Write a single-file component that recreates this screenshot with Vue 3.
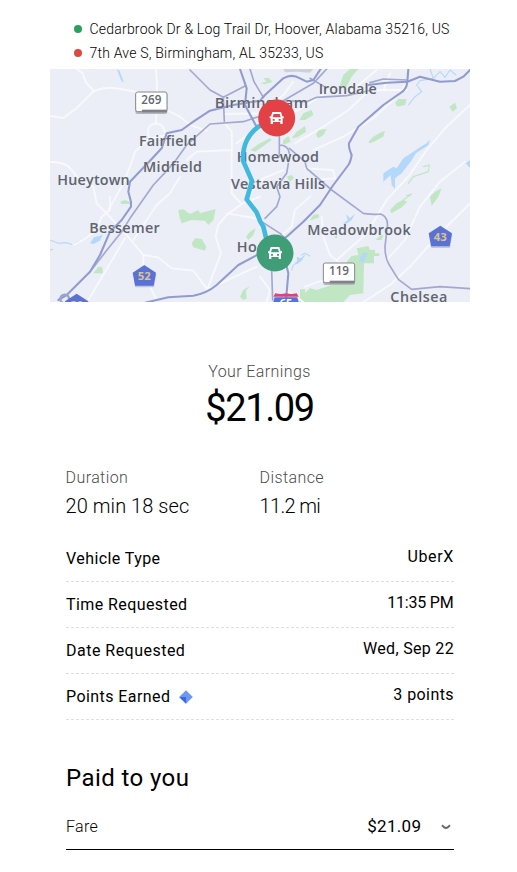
<script setup>
const stops = [
  { kind: 'start', text: 'Cedarbrook Dr & Log Trail Dr, Hoover, Alabama 35216, US' },
  { kind: 'end', text: '7th Ave S, Birmingham, AL 35233, US' },
]

const whiteRoads = [
  'M80 177L98 190L108 218L132 243L80 294L40 324L0 318',
  'M132 243Q170 228 205 236L330 258L350 300L390 320L420 345L470 362',
  'M318 177L322 246L318 340Q285 345 298 385L350 375L335 345L318 340',
  'M298 385L255 425L240 470L220 520L170 610',
  'M0 456Q50 455 65 480L80 500L130 530L140 580L165 605L230 675L280 735L325 742L365 775L430 782L472 838L620 770',
  'M180 560L180 600L155 620L140 660L100 690L70 705',
  'M390 500L360 550L320 585L250 690M225 685L115 870',
  'M280 735L280 780M300 830L318 866',
  'M630 560L575 582L530 615L505 645L497 680L513 730L472 838',
  'M530 610L620 625M545 420L545 550L575 582M520 335L545 365L546 420L440 425L410 450',
  'M525 312L640 310',
  'M735 400L820 350L895 300L960 240M790 420L880 380L970 325L1045 255L1070 220',
  'M640 345L745 300L850 235M895 250L960 240L1070 240',
  'M895 250L980 180M1000 240L1020 190',
  'M1260 285L1190 350L1130 420L1075 500L1010 570L950 670L860 750',
  'M1245 455L1170 515L1110 590L1065 690L1010 750',
  'M1260 580L1160 680L1080 770L1020 825L940 876',
  'M765 475L850 480L855 505L765 510M780 560L735 600L725 650L690 680',
  'M815 620L820 680L840 735L870 760',
  'M630 800L660 840L650 876M765 830L820 810M710 840L760 876',
  'M590 560L640 505L700 480M560 400L600 370M640 300L700 255L730 215',
]
const blueRoads = [
  'M420 180L480 240L520 262L585 228M520 262L523 335',
  'M120 785L175 715L215 665L240 625L310 525L345 488L378 450L410 405L480 342L580 335L625 320',
  'M600 177L612 215L640 262M700 272L770 275L800 262L890 257L965 240',
  'M688 378V440M688 405Q715 405 718 430M715 460L710 490L680 530L690 560L680 590L645 625',
  'M718 415L765 455L770 475L845 540L940 610Q980 615 992 612Q1015 620 1012 650L1005 710Q1005 745 1018 765L1045 808L1085 838L1170 830L1260 836',
  'M665 780L668 870M635 635L690 670L710 690M960 218L1000 207L1070 210',
  'M700 272L790 220L830 177M780 205L820 228',
]
const freeways = [
  'M25 870L50 855L120 785L150 735L180 665L215 630L243 590L243 575L235 545L240 515L300 452L335 415L350 370L395 360L430 335L480 302L550 285L630 272L645 255L700 205Q725 190 750 205L770 215L790 210L812 177',
  'M570 177L590 235L585 285L622 355',
  'M1075 177L1072 215Q1070 240 1050 250L1000 285L925 350L897 400Q895 412 905 435Q902 455 895 465L850 525L810 585L760 635L710 680L640 725L565 765L500 825Q470 850 430 857L355 862L285 878',
  'M955 225L1010 218L1072 215L1110 200L1170 215L1215 213L1240 200L1262 178',
  'M705 750L715 790L708 870',
]
const parks = [
  'M630 220L650 215L640 205L655 203L668 216L645 222Z',
  'M868 230L880 195L900 177H925L905 200L890 230Z',
  'M1035 280L1045 267L1070 268L1065 285L1042 290Z',
  'M1198 290L1215 278L1221 295L1208 305Z',
  'M955 395L970 380L990 368L1005 362L1000 380L970 396L960 400Z',
  'M725 385L740 365L765 348L768 365L742 382Z',
  'M798 375L805 360L830 357L820 375L805 385Z',
  'M748 330L760 310L785 300L790 315L765 330Z',
  'M698 402L700 390L715 378L722 395L705 403Z',
  'M600 420L630 400L660 385L665 390L635 412L615 425Z',
  'M385 600L400 598L420 612L445 600L450 610L497 597L490 630L475 645L465 632L425 630L395 640L388 620Z',
  'M425 700L435 685L455 687L469 710L465 722L430 712Z',
  'M210 575L225 570L240 576L240 582H215Z',
  'M130 790L145 770L157 772L158 790Z',
  'M750 876V838H765V848L780 835L800 840L860 820L900 800L895 765L890 755L905 738L925 735L920 715L945 710L955 708L960 720H975V730H988V738H972V760H942L940 850L900 855L880 876Z',
  'M780 630L790 615L805 612L808 622L785 630Z',
  'M1020 600L1040 580L1060 570L1072 575L1055 592L1025 610Z',
  'M1140 560L1155 545L1175 535L1165 560L1145 588Z',
  'M570 860L580 840L600 828L588 842L590 866L580 870Z',
  'M588 680L600 665L617 655L610 675L595 690Z',
  'M710 500L725 495L732 503L720 515Z',
  'M977 690L990 677L1000 675L995 690Z',
  'M852 683L860 676L862 684Z',
]
const lakes = [
  'M200 177L209 183L222 218L214 212Z',
  'M1000 515L1000 490L1030 470L1040 475L1060 445L1080 432L1105 415L1130 400L1140 388L1135 405L1098 430L1082 455L1055 490L1035 505L1035 537L1025 525L1022 495Z',
  'M120 700L132 682L158 675L150 692L130 702Z',
  'M880 640L893 630L888 613L900 624L915 612L905 630L885 644Z',
  'M730 765L742 752L740 740L752 745L767 732L755 752L742 762Z',
  'M928 757L930 742L940 728L955 730L940 757Z',
  'M1247 460L1260 450V474Z',
]
const streams = [
  'M1140 177L1150 205L1170 185L1185 202L1200 180L1218 195M1075 285L1095 260L1115 245L1100 225L1110 212L1150 205',
  'M0 690L25 700L50 698L70 705L85 695M0 720L8 718',
  'M730 765L725 780M755 735L765 730L780 738',
]
const places = [
  ['Birmingham', 494, 294, 280, 45], ['Irondale', 806, 251, 174, 43],
  ['Fairfield', 267, 409, 173, 43], ['Midfield', 279, 487, 177, 43],
  ['Homewood', 560, 457, 247, 43], ['Hueytown', 22, 525, 217, 43],
  ['Vestavia Hills', 543, 537, 282, 43], ['Bessemer', 118, 669, 211, 43],
  ['Meadowbrook', 772, 676, 310, 43], ['Hoover', 560, 725, 158, 43],
  ['Chelsea', 1021, 875, 171, 43],
]
const pentagons = [['52', 283, 798], ['43', 1171, 680], ['20', 80, 884]]
const plates = [['269', 304, 276], ['119', 867, 789]]
const pins = [
  { id: 'dropoff', x: 680, y: 324, fill: '#e24145' },
  { id: 'pickup', x: 675, y: 729, fill: '#3f9d78' },
]

const details = [
  { label: 'Vehicle Type', value: 'UberX', a: 'vehicle' },
  { label: 'Time Requested', value: '11:35 PM', a: 'time' },
  { label: 'Date Requested', value: 'Wed, Sep 22', a: 'date' },
  { label: 'Points Earned', value: '3 points', a: 'points' },
]
</script>

<template>
  <main class="trip">
    <ul class="stops">
      <li v-for="s in stops" :key="s.kind" :class="s.kind"><i class="dot"></i><span>{{ s.text }}</span></li>
    </ul>

    <svg class="map" viewBox="0 177 1260 699" preserveAspectRatio="none">
      <rect y="177" width="1260" height="699" fill="#ebeef6" />
      <path d="M700 177H790L780 188L740 185L705 187Z" fill="#cdd1de" />
      <path v-for="d in parks" :key="d" :d="d" fill="#c0e6c4" />
      <path v-for="d in lakes" :key="d" :d="d" fill="#b4d8fa" />
      <g fill="none" stroke-linejoin="round" stroke-linecap="round">
        <path v-for="d in streams" :key="d" :d="d" stroke="#b9d9f6" stroke-width="3.5" />
        <path d="M1075 520L1090 500L1135 485L1138 465L1120 470M1025 600L1060 570L1085 552L1070 557" stroke="#c0e6c4" stroke-width="3.5" />
        <path v-for="d in whiteRoads" :key="d" :d="d" stroke="#f8f9fc" stroke-width="5.5" />
        <path v-for="d in blueRoads" :key="d" :d="d" stroke="#a3a8d0" stroke-width="5" />
        <path v-for="d in freeways" :key="d" :d="d" stroke="#929bce" stroke-width="6.2" />
      </g>
      <circle cx="44" cy="867" r="13" fill="none" stroke="#9aa2ce" stroke-width="7" />

      <g class="place">
        <text v-for="p in places" :key="p[0]" :x="p[1]" :y="p[2]" :textLength="p[3]" :font-size="p[4]">{{ p[0] }}</text>
      </g>

      <g v-for="p in plates" :key="p[0]" :transform="`translate(${p[1]} ${p[2]})`">
        <rect x="-48" y="-27" width="96" height="63" rx="7" fill="#b4b6ba" />
        <rect x="-47" y="-30" width="94" height="59" rx="6" fill="#fff" stroke="#85888e" stroke-width="3" />
        <path d="M-28 23H47V31H-28Z" fill="#7f8288" />
        <text class="plate" text-anchor="middle" y="7">{{ p[0] }}</text>
      </g>
      <g v-for="p in pentagons" :key="p[0]" :transform="`translate(${p[1]} ${p[2]})`">
        <path d="M-31 -4L0 -29L36 -4L29 34H-27Z" fill="#c3c8d4" />
        <path d="M0 -33L35 -10L28 29H-28L-35 -10Z" fill="#5a72d5" />
        <text class="county" text-anchor="middle" y="12">{{ p[0] }}</text>
      </g>
      <g>
        <path d="M674 862H742L746 876H670Z" fill="#5a72d5" />
        <path d="M676 850Q692 854 708 850Q724 854 740 850L746 860H670Z" fill="#e63f76" />
        <text class="interstate" x="708" y="891" text-anchor="middle">65</text>
      </g>

      <path d="M665 335L625 350Q600 370 591 390Q578 415 579 452L606 513L590 568L620 607L631 635L640 650L652 700" fill="none" stroke="#41b9dc" stroke-width="14" stroke-linejoin="round" />
      <g v-for="p in pins" :key="p.id" :transform="`translate(${p.x} ${p.y})`">
        <circle r="55.5" :fill="p.fill" />
        <path fill="#fff" fill-rule="evenodd" d="M-13 -18H13L17 -5H21V1H18V18H11V12H-11V18H-18V1H-21V-5H-17ZM-9 -12L-12 -2H12L9 -12ZM-12 3V8H-6V3ZM6 3V8H12V3Z" />
      </g>
    </svg>

    <section class="earnings">
      <p class="caption">Your Earnings</p>
      <p class="total">$21.09</p>
    </section>

    <section class="stats">
      <div><p class="caption">Duration</p><p class="figure">20 min 18 sec</p></div>
      <div><p class="caption">Distance</p><p class="figure distance">11.2 mi</p></div>
    </section>

    <dl class="details">
      <div v-for="d in details" :key="d.a" class="row" :class="d.a">
        <dt>{{ d.label }}
          <svg v-if="d.a === 'points'" class="gem" viewBox="0 0 14 14">
            <path d="M7 0.3L13.8 7L7 13.7L0.2 7Z" fill="#6d98f2" />
            <path d="M0.2 7H7V13.7Z" fill="#376bdd" />
          </svg>
        </dt>
        <dd>{{ d.value }}</dd>
      </div>
    </dl>

    <h2>Paid to you</h2>
    <div class="fare">
      <span class="fare-label">Fare</span>
      <span class="fare-value">$21.09</span>
      <svg class="chevron" viewBox="0 0 10 6"><path d="M1 1.2L3.4 3.4Q5 4.5 6.6 3.4L9 1.2" fill="none" stroke="#686868" stroke-width="1.9" /></svg>
    </div>
  </main>
</template>

<style>
body { margin: 0; background: #fff; }
</style>

<style scoped>
.trip {
  box-sizing: border-box;
  width: 517px;
  height: 872px;
  padding: 17px 47px 0 50px;
  overflow: hidden;
  font-family: Roboto, "Liberation Sans", sans-serif;
  color: #000;
}
p, h2, dl, dd, ul { margin: 0; padding: 0; }
.stops { list-style: none; height: 52px; padding-left: 24px; }
.stops li { display: flex; align-items: center; height: 24px; font-size: 14px; font-weight: 300; letter-spacing: 0.21px; white-space: nowrap; }
.dot { width: 8px; height: 8px; margin-right: 7.5px; border-radius: 50%; background: #2ba05b; }
.end .dot { background: #dc493f; }
.map { display: block; width: 420px; height: 233px; }
.place { font-family: "Open Sans", sans-serif; font-weight: 600; fill: #5f646f; stroke: #ebeef6; stroke-width: 2px; stroke-opacity: 0.7; paint-order: stroke; }
.plate { font: 600 35px "Open Sans", sans-serif; fill: #62666e; }
.county { font: 700 34px "Open Sans", sans-serif; fill: #dcc588; }
.interstate { font: 700 33px "Open Sans", sans-serif; fill: #fff; }
.earnings { padding: 59px 1px 0 0; text-align: center; }
.caption { font-size: 16px; line-height: 22px; font-weight: 300; color: #4c4c4c; letter-spacing: 0.4px; }
.total { font-size: 38px; line-height: 50px; font-weight: 450; letter-spacing: -1.4px; }
.stats { display: grid; grid-template-columns: 194px 1fr; padding: 34px 0 0 15.6px; }
.figure { padding-top: 1px; font-size: 20px; line-height: 32px; font-weight: 300; letter-spacing: 0.05px; }
.distance { letter-spacing: -0.65px; }
.details { width: 388px; margin: 14px 0 0 16px; }
.row { display: flex; justify-content: space-between; box-sizing: border-box; height: 46px; border-bottom: 1px dashed #dedede; font-size: 16px; line-height: 45px; letter-spacing: 0.42px; }
.row dt { display: flex; align-items: center; }
.gem { width: 14px; height: 14px; margin: 1px 0 0 9px; }
.row dd { line-height: 41px; }
.time dd { letter-spacing: -0.2px; padding-right: 0.6px; }
.date dt { letter-spacing: 0.48px; }
.date dd { letter-spacing: 0.32px; }
.vehicle dd { letter-spacing: 0.65px; }
h2 { margin: 38px 0 0 16px; font-size: 24px; line-height: 40px; font-weight: 400; letter-spacing: 0.42px; }
.fare { display: flex; align-items: center; box-sizing: border-box; width: 388px; height: 52px; margin-left: 16px; padding: 5px 3px 0 0; border-bottom: 1px solid #000; font-size: 16px; }
.fare-label { font-weight: 300; letter-spacing: 0.3px; }
.fare-value { margin-left: auto; font-size: 17px; font-weight: 450; letter-spacing: 0.3px; }
.chevron { width: 10px; height: 6px; margin: 2px 0 0 19.7px; }
</style>
